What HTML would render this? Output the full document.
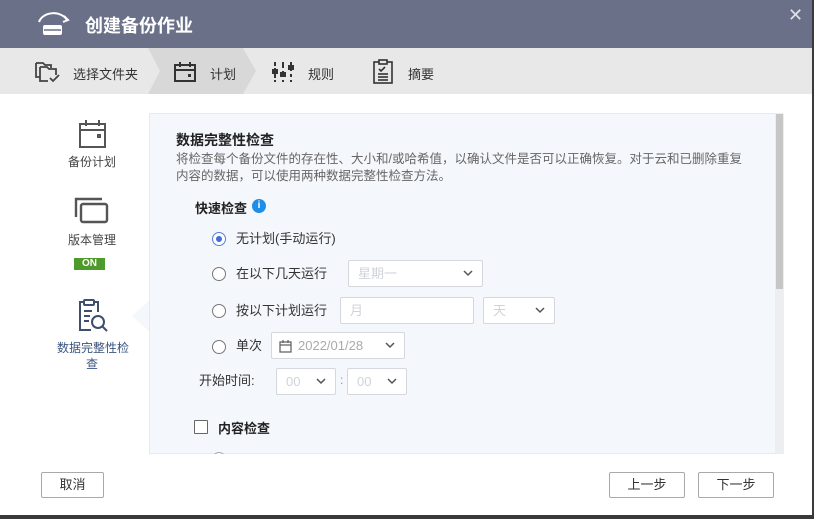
<!DOCTYPE html>
<html><head><meta charset="utf-8"><style>
*{margin:0;padding:0;box-sizing:border-box}
body{width:814px;height:519px;overflow:hidden;background:#3a3a3a;font-family:"Liberation Sans","Noto Sans CJK SC",sans-serif;position:relative}
.dlg{position:absolute;left:0;top:0;width:812px;height:515px;background:#fff}
.a{position:absolute;white-space:nowrap}
.sel{position:absolute;border:1px solid #d4d7dc;background:#fff;border-radius:2px;color:#cfd3d9;font-size:13px;padding-left:9px;line-height:25px}
.chev{position:absolute;right:9px;top:8px}
.radio{position:absolute;width:14px;height:14px;border:1px solid #777;border-radius:50%;background:#fff}
.lbl{position:absolute;font-size:13px;color:#333;line-height:16px}
.btn{position:absolute;border:1px solid #a9a9a9;border-radius:2px;background:#fff;font-size:13px;color:#333;text-align:center;line-height:24px}
</style></head><body>
<div class="dlg">
<div class="a" style="left:0;top:0;width:812px;height:48px;background:#6b7089"></div>
<svg class="a" style="left:36px;top:10px" width="36" height="28" viewBox="0 0 36 28"><path d="M3 12 A15 12 0 0 1 31 10" fill="none" stroke="#fff" stroke-width="2"/><path d="M28 6 L32 10 L27 12" fill="none" stroke="#fff" stroke-width="2"/><rect x="7" y="15" width="19" height="10" rx="2" fill="#fff"/><line x1="8" y1="20" x2="25" y2="20" stroke="#6b7089" stroke-width="1.5"/></svg>
<div class="a" style="left:85px;top:14px;font-size:18px;font-weight:bold;color:#fff;line-height:24px">创建备份作业</div>
<div class="a" style="left:788px;top:5px;font-size:18px;color:#e0e2ea">✕</div>
<div class="a" style="left:0;top:48px;width:812px;height:46px;background:#e8e8e8"></div>
<svg class="a" style="left:148px;top:48px" width="112" height="46"><polygon points="0,0 95,0 108,23 95,46 0,46 12,23" fill="#d8d8d8"/></svg>
<svg class="a" style="left:34px;top:61px" width="28" height="24" viewBox="0 0 28 24" fill="none" stroke="#444" stroke-width="1.8"><path d="M2 2h7l2 2h6v3"/><path d="M2 2v14h4"/><path d="M6 6h7l2 2h7v6"/><path d="M6 6v14h8"/><path d="M16 17l3 3 6-6"/></svg>
<div class="a" style="left:73px;top:64px;font-size:13px;color:#333">选择文件夹</div>
<svg class="a" style="left:173px;top:61px" width="24" height="22" viewBox="0 0 24 22" fill="none" stroke="#333" stroke-width="2"><rect x="2" y="4" width="20" height="16"/><line x1="2" y1="9" x2="22" y2="9"/><line x1="7" y1="1" x2="7" y2="6"/><line x1="17" y1="1" x2="17" y2="6"/><rect x="15" y="13" width="3" height="3" fill="#333" stroke="none"/></svg>
<div class="a" style="left:210px;top:64px;font-size:13px;color:#333">计划</div>
<svg class="a" style="left:272px;top:61px" width="22" height="22" viewBox="0 0 22 22" stroke="#333" stroke-width="2"><line x1="3" y1="1" x2="3" y2="21" stroke-dasharray="4 2"/><line x1="11" y1="1" x2="11" y2="21" stroke-dasharray="6 3"/><line x1="19" y1="1" x2="19" y2="21" stroke-dasharray="3 3"/><rect x="1" y="9" width="4" height="3" fill="#333"/><rect x="9" y="12" width="4" height="3" fill="#333"/><rect x="17" y="5" width="4" height="3" fill="#333"/></svg>
<div class="a" style="left:308px;top:64px;font-size:13px;color:#333">规则</div>
<svg class="a" style="left:372px;top:59px" width="22" height="26" viewBox="0 0 22 26" fill="none" stroke="#333" stroke-width="1.6"><rect x="2" y="3" width="18" height="21"/><rect x="7" y="1" width="8" height="4" fill="#e8e8e8"/><path d="M7 10l2 2 4-4"/><line x1="6" y1="15" x2="16" y2="15"/><line x1="6" y1="18" x2="16" y2="18"/><line x1="6" y1="21" x2="16" y2="21"/></svg>
<div class="a" style="left:408px;top:64px;font-size:13px;color:#333">摘要</div>

<svg class="a" style="left:78px;top:119px" width="30" height="30" viewBox="0 0 30 30" fill="none" stroke="#555" stroke-width="2"><rect x="2" y="5" width="25" height="23"/><line x1="2" y1="11" x2="27" y2="11"/><line x1="8" y1="1" x2="8" y2="7"/><line x1="21" y1="1" x2="21" y2="7"/><rect x="19" y="15" width="4" height="4" fill="#555" stroke="none"/></svg>
<div class="a" style="left:68px;top:153px;font-size:12px;color:#444">备份计划</div>
<svg class="a" style="left:74px;top:195px" width="36" height="30" viewBox="0 0 36 30" fill="none" stroke="#555" stroke-width="2.4"><path d="M2 22V4h26"/><rect x="7" y="9" width="26" height="18" rx="2"/></svg>
<div class="a" style="left:68px;top:231px;font-size:12px;color:#444">版本管理</div>
<div class="a" style="left:74px;top:258px;width:31px;height:12px;background:#4e9a2a;color:#fff;font-size:10px;font-weight:bold;text-align:center;line-height:12px">ON</div>
<svg class="a" style="left:76px;top:298px" width="34" height="36" viewBox="0 0 34 36" fill="none" stroke="#3d4f6d" stroke-width="2"><path d="M8 4H4v28h11"/><path d="M18 4h4v10"/><rect x="8" y="2" width="10" height="5" rx="1"/><line x1="8" y1="13" x2="16" y2="13"/><line x1="8" y1="18" x2="14" y2="18"/><line x1="8" y1="23" x2="13" y2="23"/><circle cx="22" cy="24" r="6"/><line x1="26" y1="28" x2="31" y2="33"/></svg>
<div class="a" style="left:57px;top:339px;font-size:12px;color:#3b5580">数据完整性检</div>
<div class="a" style="left:86px;top:355px;font-size:12px;color:#3b5580">查</div>
<svg class="a" style="left:132px;top:300px" width="18" height="32"><polygon points="18,0 0,16 18,32" fill="#f4f7fb"/></svg>

<div class="a" style="left:149px;top:113px;width:635px;height:341px;background:#f4f7fb;border:1px solid #e6eaef"></div>
<div class="a" style="left:775px;top:113px;width:9px;height:341px;background:#eceef0"></div>
<div class="a" style="left:776px;top:114px;width:7px;height:175px;background:#c6c6c6"></div>
<div class="a" style="left:176px;top:130px;font-size:14px;font-weight:bold;color:#222">数据完整性检查</div>
<div class="a" style="left:176px;top:151px;font-size:12.5px;color:#666;line-height:17px">将检查每个备份文件的存在性、大小和/或哈希值，以确认文件是否可以正确恢复。对于云和已删除重复<br>内容的数据，可以使用两种数据完整性检查方法。</div>
<div class="a" style="left:195px;top:198px;font-size:13px;font-weight:bold;color:#222">快速检查</div>
<div class="a" style="left:252px;top:199px;width:14px;height:14px;border-radius:50%;background:#1e8fe8;color:#fff;font-size:10px;font-weight:bold;text-align:center;line-height:14px">i</div>

<div class="radio" style="left:212px;top:232px;border-color:#5a7fd6"></div><div class="a" style="left:216px;top:236px;width:6px;height:6px;border-radius:50%;background:#3d6fd8"></div>
<div class="lbl" style="left:236px;top:231px">无计划(手动运行)</div>
<div class="radio" style="left:212px;top:267px"></div><div class="lbl" style="left:236px;top:266px">在以下几天运行</div>
<div class="sel" style="left:348px;top:260px;width:135px;height:27px">星期一<svg class="chev" width="10" height="8"><path d="M1 2l4 4 4-4" fill="none" stroke="#555" stroke-width="1.5"/></svg></div>
<div class="radio" style="left:212px;top:304px"></div><div class="lbl" style="left:236px;top:303px">按以下计划运行</div>
<div class="sel" style="left:340px;top:297px;width:134px;height:27px">月</div>
<div class="sel" style="left:483px;top:297px;width:72px;height:27px">天<svg class="chev" width="10" height="8"><path d="M1 2l4 4 4-4" fill="none" stroke="#555" stroke-width="1.5"/></svg></div>
<div class="radio" style="left:212px;top:340px"></div><div class="lbl" style="left:236px;top:338px">单次</div>
<div class="sel" style="left:271px;top:332px;width:134px;height:27px;padding-left:26px;color:#aaa">2022/01/28<svg class="a" style="left:7px;top:6px" width="13" height="14" viewBox="0 0 13 14" fill="none" stroke="#666" stroke-width="1.3"><rect x="1" y="3" width="11" height="10"/><line x1="1" y1="6" x2="12" y2="6"/><line x1="4" y1="1" x2="4" y2="4"/><line x1="9" y1="1" x2="9" y2="4"/></svg><svg class="chev" width="10" height="8"><path d="M1 2l4 4 4-4" fill="none" stroke="#555" stroke-width="1.5"/></svg></div>
<div class="lbl" style="left:199px;top:373px">开始时间:</div>
<div class="sel" style="left:276px;top:368px;width:60px;height:27px">00<svg class="chev" width="10" height="8"><path d="M1 2l4 4 4-4" fill="none" stroke="#555" stroke-width="1.5"/></svg></div>
<div class="a" style="left:340px;top:373px;font-size:12px;color:#999">:</div>
<div class="sel" style="left:347px;top:368px;width:60px;height:27px">00<svg class="chev" width="10" height="8"><path d="M1 2l4 4 4-4" fill="none" stroke="#555" stroke-width="1.5"/></svg></div>
<div class="a" style="left:194px;top:420px;width:14px;height:14px;border:1px solid #666;background:#fff;border-radius:1px"></div>
<div class="a" style="left:218px;top:418px;font-size:13px;font-weight:bold;color:#222">内容检查</div>
<div class="a" style="left:150px;top:448px;width:624px;height:6px;overflow:hidden"><div class="radio" style="left:62px;top:4px;border-color:#9ab"></div></div>

<div class="btn" style="left:41px;top:472px;width:63px;height:26px">取消</div>
<div class="btn" style="left:609px;top:472px;width:76px;height:26px">上一步</div>
<div class="btn" style="left:698px;top:472px;width:76px;height:26px">下一步</div>
</div>
</body></html>
